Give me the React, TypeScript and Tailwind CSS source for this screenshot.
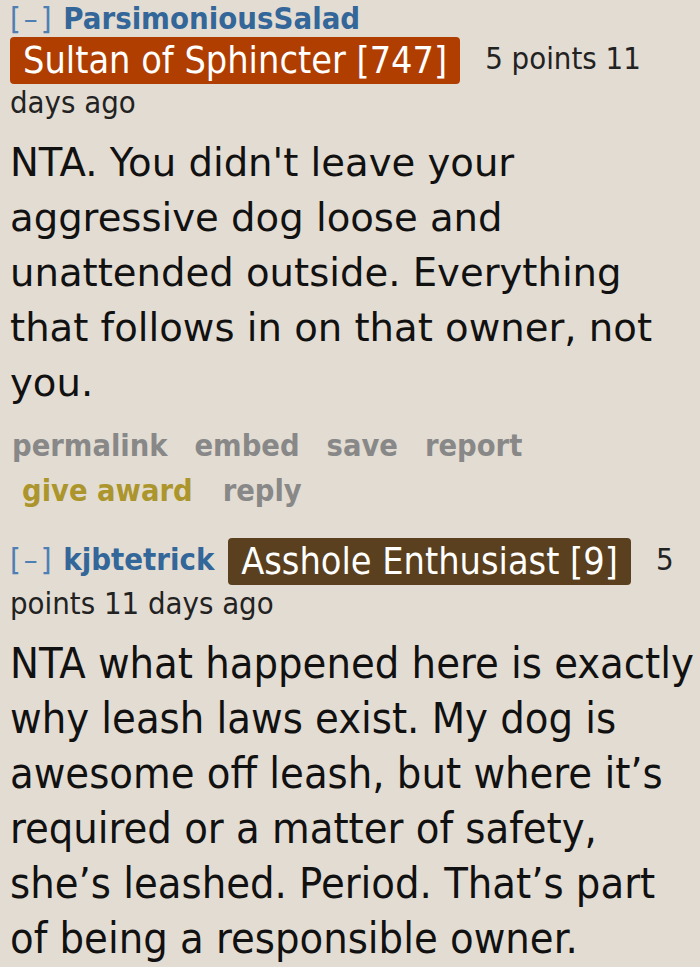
const cond = { fontFamily: '"DejaVu Sans Condensed", "DejaVu Sans", sans-serif' };

const Comment = ({
  user,
  flair,
  flairClass,
  meta,
  body,
  bodyFont,
  links,
}: {
  user: string;
  flair: string;
  flairClass: string;
  meta: string;
  body: string;
  bodyFont: string;
  links?: boolean;
}) => (
  <div className="pl-[10px] pr-[4px]">
    <p className="text-[30.8px] leading-[37px] text-[#222]" style={cond}>
      <span className="tracking-[3px] text-[#4d7fb5]">[–]</span>{" "}
      <span className="mr-[5px] font-bold text-[#369]">{user}</span>{" "}
      <span
        className={`inline-block h-[47px] rounded-[4px] px-[13px] align-middle text-[37.5px] leading-[47px] text-white ${flairClass}`}
      >
        {flair}
      </span>
      <span className="ml-[25px]">{meta}</span>
    </p>
    <p className={`mt-[14px] leading-[55px] text-[#111] ${bodyFont}`}>{body}</p>
    {links && (
      <div className="mt-[13px] text-[30.5px] font-bold leading-[45px] text-[#888]" style={cond}>
        <div className="flex gap-[27px] pl-[2px]">
          <span>permalink</span>
          <span>embed</span>
          <span>save</span>
          <span>report</span>
        </div>
        <div className="flex gap-[30px] pl-[12px]">
          <span className="text-[#ab952c]">give award</span>
          <span>reply</span>
        </div>
      </div>
    )}
  </div>
);

export default function App() {
  return (
    <div className="h-[967px] w-[700px] overflow-hidden bg-[#e3dcd2]">
      <Comment
        user="ParsimoniousSalad"
        flair="Sultan of Sphincter [747]"
        flairClass="bg-[#b03e00]"
        meta="5 points 11 days ago"
        body="NTA. You didn't leave your aggressive dog loose and unattended outside. Everything that follows in on that owner, not you."
        bodyFont="font-['DejaVu_Sans',sans-serif] text-[38.6px]"
        links
      />
      <div className="mt-[25px]">
        <Comment
          user="kjbtetrick"
          flair="Asshole Enthusiast [9]"
          flairClass="bg-[#5a401e]"
          meta="5 points 11 days ago"
          body="NTA what happened here is exactly why leash laws exist. My dog is awesome off leash, but where it’s required or a matter of safety, she’s leashed. Period. That’s part of being a responsible owner."
          bodyFont="font-['DejaVu_Sans_Condensed',sans-serif] text-[43px]"
        />
      </div>
    </div>
  );
}
